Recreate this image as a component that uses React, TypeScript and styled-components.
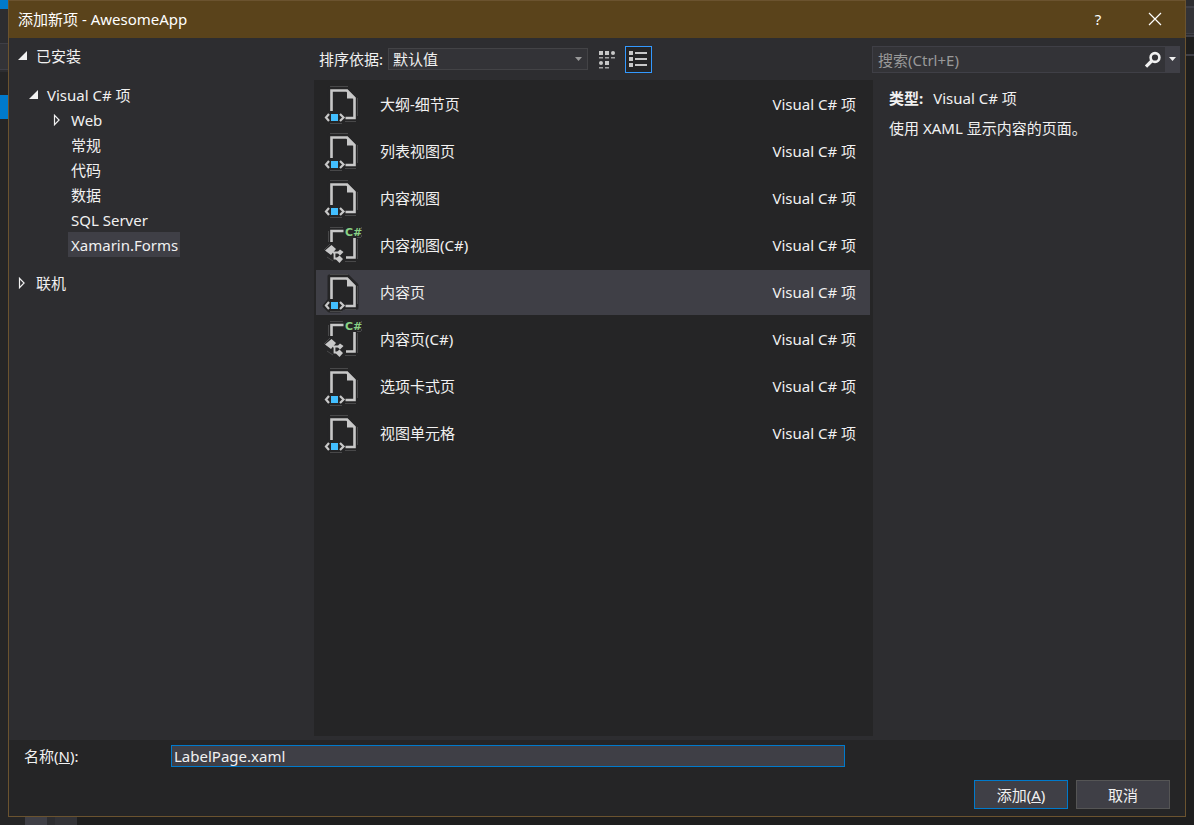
import React, { useState } from "react";
import styled, { createGlobalStyle, css } from "styled-components";

const GlobalStyle = createGlobalStyle`
  *, *::before, *::after { box-sizing: border-box; }
  body {
    margin: 0;
    background: #1e1e1e;
    color: #f1f1f1;
    font-family: "Noto Sans", "Noto Sans CJK SC", sans-serif;
    font-size: 15px;
    line-height: 24px;
  }
  button, input, select { font: inherit; color: inherit; }
  ul { list-style: none; margin: 0; padding: 0; }
`;

const Desktop = styled.div`
  display: grid;
  grid-template-columns: 8px minmax(0, 1fr) 8px;
  grid-template-rows: 1fr 8px;
  min-height: 100vh;
`;

const Strip = styled.div`
  display: flex;
  flex-direction: column;
  background: #252526;
`;

const RightStrip = styled(Strip)`
  background: #1e1e1e;
`;

const BottomStrip = styled.div`
  grid-column: 1 / -1;
  display: flex;
  background: #1e1e1e;
`;

const Band = styled.div<{ $size: number; $color: string }>`
  flex: 0 0 ${(p) => p.$size}px;
  background: ${(p) => p.$color};
`;

const Dialog = styled.section`
  display: flex;
  flex-direction: column;
  border: 1px solid #6b532f;
`;

const TitleBar = styled.header`
  display: flex;
  align-items: center;
  height: 37px;
  padding: 0 12px 2px 9px;
  background: #5a431b;
`;

const Title = styled.h1`
  flex: 1;
  margin: 0;
  font-size: 15px;
  font-weight: 400;
  color: #fff;
`;

const CaptionButton = styled.button`
  display: flex;
  align-items: center;
  justify-content: center;
  width: 36px;
  height: 34px;
  margin-left: 21px;
  padding: 0;
  border: 0;
  background: none;
  color: #fff;
`;

const Body = styled.main`
  flex: 1;
  display: grid;
  grid-template-columns: 305px minmax(0, 1fr) 312px;
  background: #2d2d30;
`;

const Tree = styled.nav`
  padding-top: 5px;
`;

const TreeGroup = styled.ul`
  && { padding: 14px 0 13px; }
`;

const TreeRow = styled.button<{ $level: number }>`
  display: flex;
  align-items: center;
  height: 25px;
  padding: 0 0 0 ${(p) => [8, 19, 43][p.$level]}px;
  border: 0;
  background: none;
  text-align: left;
`;

const ArrowSlot = styled.span`
  display: flex;
  width: 16px;
`;

const TreeLabel = styled.span<{ $selected?: boolean }>`
  height: 25px;
  padding: 0 2px 0 3px;
  line-height: 26px;
  background: ${(p) => (p.$selected ? "#3f3f46" : "transparent")};
`;

const Middle = styled.div`
  display: flex;
  flex-direction: column;
  padding-bottom: 4px;
`;

const Toolbar = styled.div`
  display: flex;
  align-items: center;
  height: 42px;
  padding-left: 5px;
`;

const SortLabel = styled.label`
  width: 69px;
  white-space: nowrap;
`;

const SelectWrap = styled.div`
  display: grid;
  align-items: center;
  width: 200px;
  margin-right: 5px;
  svg {
    grid-area: 1 / 1;
    justify-self: end;
    margin-right: 5px;
    pointer-events: none;
  }
`;

const SortSelect = styled.select`
  grid-area: 1 / 1;
  appearance: none;
  width: 100%;
  height: 22px;
  padding: 0 20px 0 4px;
  border: 1px solid #434346;
  border-radius: 0;
  background: #333337;
  line-height: 20px;
`;

const ViewButton = styled.button<{ $active?: boolean }>`
  display: flex;
  align-items: center;
  justify-content: center;
  width: 27px;
  height: 27px;
  margin-right: 5px;
  padding: 0;
  border: 1px solid ${(p) => (p.$active ? "#3399ff" : "transparent")};
  background: ${(p) => (p.$active ? "#252526" : "none")};
`;

const TemplateList = styled.ul`
  && {
    flex: 1;
    display: flex;
    flex-direction: column;
    gap: 2px;
    padding: 2px 3px 2px 2px;
    background: #252526;
  }
`;

const TemplateRow = styled.button<{ $selected?: boolean }>`
  display: flex;
  align-items: center;
  width: 100%;
  height: 45px;
  padding: 0 14px 2px 4px;
  border: 0;
  background: ${(p) => (p.$selected ? "#3f3f46" : "none")};
  text-align: left;
  svg { align-self: flex-start; }
`;

const TemplateName = styled.span`
  flex: 1;
  padding-left: 15px;
`;

const Details = styled.aside`
  display: flex;
  flex-direction: column;
  padding-top: 8px;
`;

const SearchBox = styled.div`
  display: flex;
  height: 27px;
  margin: 0 5px 0 -1px;
  border: 1px solid #3f3f46;
  background: #333337;
`;

const SearchInput = styled.input`
  flex: 1;
  min-width: 0;
  padding: 0 5px;
  border: 0;
  outline: 0;
  background: none;
  &::placeholder { color: #999; opacity: 1; }
`;

const SearchButton = styled.button<{ $menu?: boolean }>`
  display: flex;
  align-items: center;
  justify-content: center;
  width: ${(p) => (p.$menu ? 14 : 24)}px;
  padding: 0;
  border: 0;
  background: ${(p) => (p.$menu ? "#3f3f46" : "none")};
`;

const Facts = styled.div`
  padding: 13px 16px;
`;

const Fact = styled.p`
  margin: 0 0 6px;
  strong { margin-right: 10px; }
`;

const Footer = styled.footer`
  padding: 4px 15px 7px;
  background: #252526;
`;

const NameRow = styled.div`
  display: flex;
  align-items: center;
  padding-right: 325px;
  label { width: 147px; }
`;

const field = css`
  border: 1px solid #007acc;
  border-radius: 0;
  background: #3f3f46;
`;

const NameInput = styled.input`
  ${field}
  flex: 1;
  min-width: 0;
  height: 22px;
  padding: 0 2px;
  outline: 0;
`;

const Actions = styled.div`
  display: flex;
  justify-content: flex-end;
  gap: 8px;
  padding-top: 12px;
`;

const ActionButton = styled.button<{ $primary?: boolean }>`
  ${field}
  width: 94px;
  height: 29px;
  padding: 0;
  border-color: ${(p) => (p.$primary ? "#007acc" : "#555")};
`;

const Expanded = () => (
  <svg width="11" height="11" viewBox="0 0 11 11"><path d="M10 1v9H1z" fill="#f1f1f1" /></svg>
);

const Collapsed = () => (
  <svg width="11" height="12" viewBox="0 0 11 12">
    <path d="M2.500 1.300v9.400L7.100 6z" fill="none" stroke="#f1f1f1" strokeWidth="1.200" />
  </svg>
);

const Caret = ({ color }: { color: string }) => (
  <svg width="9" height="5" viewBox="0 0 9 5"><path d="M1 0h7L4.500 4z" fill={color} /></svg>
);

const CloseIcon = () => (
  <svg width="14" height="14" viewBox="0 0 14 14">
    <path d="M1 1l12 12M13 1L1 13" stroke="#fff" strokeWidth="1.200" />
  </svg>
);

const SearchIcon = () => (
  <svg width="18" height="18" viewBox="0 0 18 18" fill="none" stroke="#f1f1f1">
    <circle cx="11" cy="6.500" r="4.400" strokeWidth="2.600" />
    <path d="M7.600 10L2 15.600" strokeWidth="3.200" />
  </svg>
);

const TilesIcon = () => (
  <svg width="19" height="19" viewBox="0 0 19 19" fill="#c8c8c8">
    <path d="M2 1h4v4H2zM8 1h4v4H8zM8 11h4v4H8z" />
    <circle cx="16" cy="3" r="2" />
    <circle cx="4" cy="13" r="2" />
    <path d="M2 7h4v1.500H2zM8 7h4v1.500H8zM14 7h4v1.500h-4zM2 17h4v1.500H2zM8 17h4v1.500H8z" opacity=".75" />
  </svg>
);

const DetailsIcon = () => (
  <svg width="19" height="19" viewBox="0 0 19 19" fill="#c8c8c8">
    <path d="M0 1h4v4H0zM0 7h4v4H0zM0 13h4v4H0zM6 2h12v2H6zM6 8h12v2H6zM6 14h12v2H6z" />
  </svg>
);

const XamlPageIcon = () => (
  <svg width="45" height="45" viewBox="0 0 45 45" fill="none">
    <path d="M9 6h19l9 9v23H23l-3 3H9l-5-5 5-6z" fill="#252526" stroke="#252526" strokeWidth="3" strokeLinejoin="round" />
    <path d="M10 4.500h18M37.500 16v21M25 39.500h11M10 41.500h12" stroke="#484849" strokeDasharray="18 3" />
    <path d="M11.500 29V8.500H27L34.500 16v20H25.500" stroke="#c8c8c8" strokeWidth="2.600" />
    <path d="M27 7.500l8.500 9H27z" fill="#c8c8c8" />
    <path d="M9 32l-3 3.500L9 39M20 32l3.500 3.500L20 39" stroke="#c8c8c8" strokeWidth="2.200" />
    <path d="M11 32h7v7h-7z" fill="#42bfff" />
  </svg>
);

const CodePageIcon = () => (
  <svg width="45" height="45" viewBox="0 0 45 45" fill="none">
    <path d="M10 4.500h13M37.500 16v20M41.500 4v2M41.500 12v2M37 14.500h4M25 38.500h11M8.500 8v11M4 27l6-6M7 34l6 4" stroke="#484849" />
    <path d="M11.500 19V8H23.500M34.500 15v19.500H26" stroke="#c8c8c8" strokeWidth="2.600" />
    <path d="M11.500 22l4.500 4-5 6-6-4.500zM20 26.500l3.500 2.500-3.500 3.500-3-3zM19.500 32.500l3.500 3.500-3.500 4-4-4z" fill="#c8c8c8" />
    <path d="M13 29.500h5M14.500 29.500v6H18" stroke="#c8c8c8" strokeWidth="1.800" />
    <text x="25" y="13" fill="#89d185" fontFamily="DejaVu Sans, sans-serif" fontSize="11" fontWeight="700">C#</text>
  </svg>
);

const categories = ["Web", "常规", "代码", "数据", "SQL Server", "Xamarin.Forms"];

const templates = [
  { name: "大纲-细节页" },
  { name: "列表视图页" },
  { name: "内容视图" },
  { name: "内容视图(C#)", code: true },
  { name: "内容页" },
  { name: "内容页(C#)", code: true },
  { name: "选项卡式页" },
  { name: "视图单元格" },
];

export default function App() {
  const [category, setCategory] = useState("Xamarin.Forms");
  const [template, setTemplate] = useState("内容页");

  return (
    <>
      <GlobalStyle />
      <Desktop>
        <Strip>
          <Band $size={9} $color="#007acc" />
          <Band $size={34} $color="#2d2d30" />
          <Band $size={1} $color="#3f3f46" />
          <Band $size={25} $color="#333337" />
          <Band $size={1} $color="#3f3f46" />
          <Band $size={2} $color="#2d2d30" />
          <Band $size={23} $color="#252526" />
          <Band $size={24} $color="#007acc" />
        </Strip>
        <Dialog aria-labelledby="dialog-title">
          <TitleBar>
            <Title id="dialog-title">添加新项 - AwesomeApp</Title>
            <CaptionButton type="button">?</CaptionButton>
            <CaptionButton type="button" aria-label="关闭"><CloseIcon /></CaptionButton>
          </TitleBar>
          <Body>
            <Tree>
              <TreeRow type="button" $level={0}>
                <ArrowSlot><Expanded /></ArrowSlot>
                <TreeLabel>已安装</TreeLabel>
              </TreeRow>
              <TreeGroup>
                <li>
                  <TreeRow type="button" $level={1}>
                    <ArrowSlot><Expanded /></ArrowSlot>
                    <TreeLabel>Visual C# 项</TreeLabel>
                  </TreeRow>
                </li>
                {categories.map((name) => (
                  <li key={name}>
                    <TreeRow type="button" $level={2} onClick={() => setCategory(name)}>
                      <ArrowSlot>{name === "Web" && <Collapsed />}</ArrowSlot>
                      <TreeLabel $selected={name === category}>{name}</TreeLabel>
                    </TreeRow>
                  </li>
                ))}
              </TreeGroup>
              <TreeRow type="button" $level={0}>
                <ArrowSlot><Collapsed /></ArrowSlot>
                <TreeLabel>联机</TreeLabel>
              </TreeRow>
            </Tree>
            <Middle>
              <Toolbar>
                <SortLabel htmlFor="sort">排序依据:</SortLabel>
                <SelectWrap>
                  <SortSelect id="sort"><option>默认值</option></SortSelect>
                  <Caret color="#999" />
                </SelectWrap>
                <ViewButton type="button" aria-label="图标"><TilesIcon /></ViewButton>
                <ViewButton type="button" aria-label="列表" $active><DetailsIcon /></ViewButton>
              </Toolbar>
              <TemplateList>
                {templates.map((t) => (
                  <li key={t.name}>
                    <TemplateRow type="button" $selected={t.name === template} onClick={() => setTemplate(t.name)}>
                      {t.code ? <CodePageIcon /> : <XamlPageIcon />}
                      <TemplateName>{t.name}</TemplateName>
                      <span>Visual C# 项</span>
                    </TemplateRow>
                  </li>
                ))}
              </TemplateList>
            </Middle>
            <Details>
              <SearchBox>
                <SearchInput type="text" aria-label="搜索" placeholder="搜索(Ctrl+E)" />
                <SearchButton type="button" aria-label="搜索"><SearchIcon /></SearchButton>
                <SearchButton type="button" aria-label="搜索选项" $menu><Caret color="#f1f1f1" /></SearchButton>
              </SearchBox>
              <Facts>
                <Fact><strong>类型:</strong>Visual C# 项</Fact>
                <Fact>使用 XAML 显示内容的页面。</Fact>
              </Facts>
            </Details>
          </Body>
          <Footer>
            <NameRow>
              <label htmlFor="name">名称(<u>N</u>):</label>
              <NameInput id="name" type="text" defaultValue="LabelPage.xaml" />
            </NameRow>
            <Actions>
              <ActionButton type="button" $primary>添加(<u>A</u>)</ActionButton>
              <ActionButton type="button">取消</ActionButton>
            </Actions>
          </Footer>
        </Dialog>
        <RightStrip>
          <Band $size={6} $color="#2d2d30" />
          <Band $size={2} $color="#3f3f46" />
          <Band $size={25} $color="#333337" />
          <Band $size={1} $color="#3f3f46" />
          <Band $size={1} $color="#2d2d30" />
          <Band $size={2} $color="#3f3f46" />
          <Band $size={17} $color="#1e1e1e" />
          <Band $size={2} $color="#3f3f46" />
        </RightStrip>
        <BottomStrip>
          <Band $size={25} $color="#252526" />
          <Band $size={22} $color="#3f3f46" />
          <Band $size={8} $color="#2d2d30" />
          <Band $size={22} $color="#333337" />
        </BottomStrip>
      </Desktop>
    </>
  );
}
